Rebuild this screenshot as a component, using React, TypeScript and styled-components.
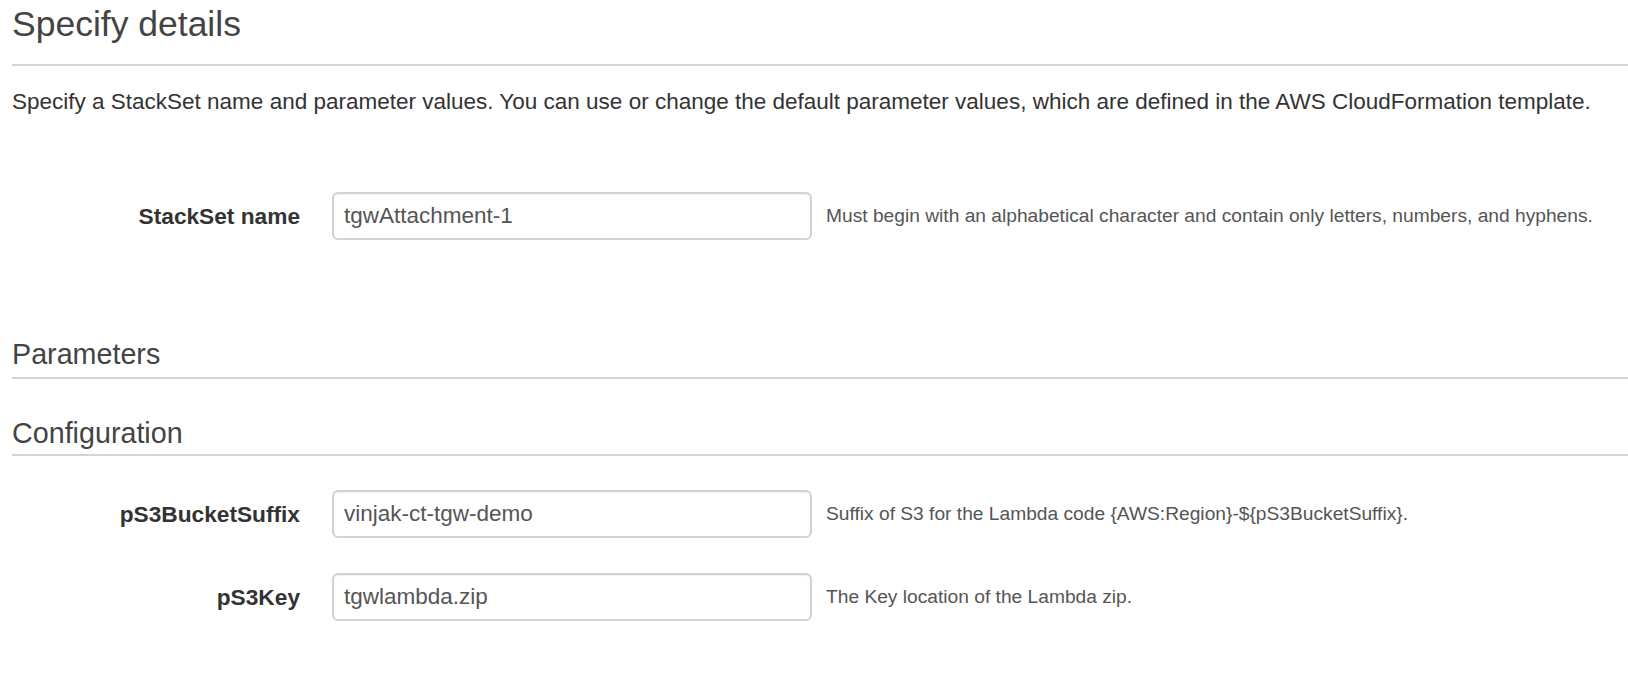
import React from "react";
import styled, { createGlobalStyle } from "styled-components";

const Global = createGlobalStyle`
  html, body { margin: 0; padding: 0; background: #fff; }
  body { font-family: "Liberation Sans", Arial, Helvetica, sans-serif; color: #333; }
`;

const Page = styled.div`
  padding: 4px 0 40px 12px;
`;

const PageTitle = styled.h1`
  margin: 0;
  font-size: 35.5px;
  line-height: 40px;
  font-weight: 400;
  color: #444;
  padding-bottom: 20px;
  border-bottom: 2px solid #d4d4d4;
`;

const Intro = styled.p`
  margin: 22px 0 0;
  font-size: 22.5px;
  line-height: 28px;
  color: #333;
`;

const SectionTitle = styled.h2<{ $top: number; $pad: number }>`
  margin: ${(p) => p.$top}px 0 0;
  font-size: 28.7px;
  line-height: 32px;
  font-weight: 400;
  color: #444;
  padding-bottom: ${(p) => p.$pad}px;
  border-bottom: 2px solid #d4d4d4;
`;

const Form = styled.div<{ $top: number }>`
  margin-top: ${(p) => p.$top}px;
  display: flex;
  flex-direction: column;
  gap: 35px;
`;

const Row = styled.div`
  display: grid;
  grid-template-columns: 288px 480px auto;
  column-gap: 32px;
  align-items: center;
`;

const Label = styled.label`
  text-align: right;
  font-weight: 700;
  font-size: 22.7px;
  color: #333;
`;

const Input = styled.input`
  box-sizing: border-box;
  width: 480px;
  height: 48px;
  padding: 0 10px;
  border: 2px solid #d2d2d2;
  border-radius: 6px;
  box-shadow: inset 0 1px 2px rgba(0, 0, 0, 0.06);
  font-family: "Liberation Sans", Arial, sans-serif;
  font-size: 22.5px;
  color: #555;
  background: #fff;
  outline: none;
`;

const Help = styled.span`
  margin-left: -18px;
  font-size: 19.2px;
  color: #555;
  white-space: nowrap;
`;

type Field = { label: string; value: string; help: string };

const FieldRow = ({ label, value, help }: Field) => (
  <Row>
    <Label>{label}</Label>
    <Input defaultValue={value} readOnly />
    <Help>{help}</Help>
  </Row>
);

export default function App() {
  return (
    <>
      <Global />
      <Page>
        <PageTitle>Specify details</PageTitle>
        <Intro>
          Specify a StackSet name and parameter values. You can use or change the default
          parameter values, which are defined in the AWS CloudFormation template.
        </Intro>
        <Form $top={76}>
          <FieldRow
            label="StackSet name"
            value="tgwAttachment-1"
            help="Must begin with an alphabetical character and contain only letters, numbers, and hyphens."
          />
        </Form>
        <SectionTitle $top={98} $pad={7}>Parameters</SectionTitle>
        <SectionTitle $top={38} $pad={5}>Configuration</SectionTitle>
        <Form $top={34}>
          <FieldRow
            label="pS3BucketSuffix"
            value="vinjak-ct-tgw-demo"
            help="Suffix of S3 for the Lambda code {AWS:Region}-${pS3BucketSuffix}."
          />
          <FieldRow label="pS3Key" value="tgwlambda.zip" help="The Key location of the Lambda zip." />
        </Form>
      </Page>
    </>
  );
}
